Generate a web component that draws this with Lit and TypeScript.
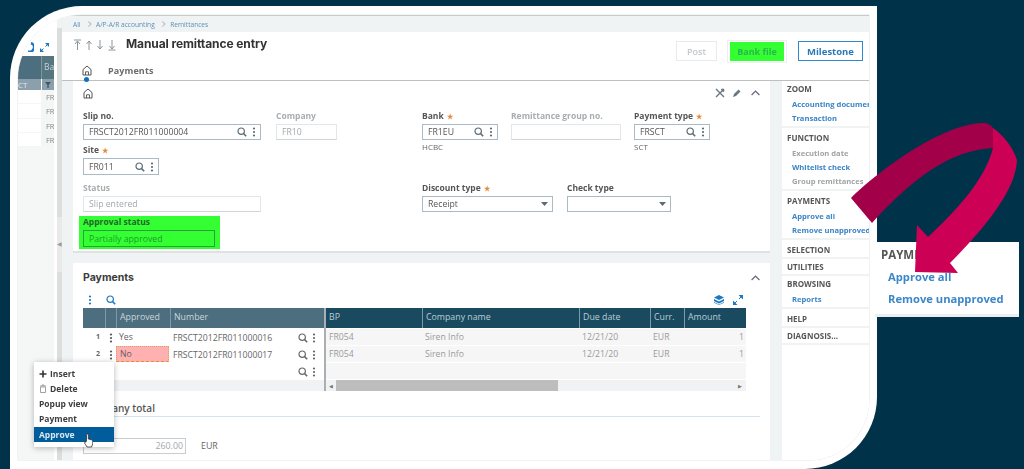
import { LitElement, html, css, svg } from "lit";
import { customElement } from "lit/decorators.js";

const searchIcon = html`<svg class="ic" width="10" height="10" viewBox="0 0 10 10"><circle cx="4.2" cy="4.2" r="3.2" fill="none" stroke="currentColor" stroke-width="1.2"/><path d="M6.6 6.6 9.2 9.2" stroke="currentColor" stroke-width="1.5"/></svg>`;
const dotsIcon = html`<svg class="ic" width="4" height="10" viewBox="0 0 4 10"><circle cx="2" cy="1.5" r="1.1" fill="currentColor"/><circle cx="2" cy="5" r="1.1" fill="currentColor"/><circle cx="2" cy="8.5" r="1.1" fill="currentColor"/></svg>`;
const homeIcon = html`<svg class="ic" width="10" height="11" viewBox="0 0 10 11"><path d="M1 4.5 5 1l4 3.5V10H1Z" fill="none" stroke="#555" stroke-width="1"/><path d="M3.5 10V6.8h3V10" fill="none" stroke="#555" stroke-width=".9"/></svg>`;
const caret = html`<svg class="ic" width="7" height="4" viewBox="0 0 7 4"><path d="M0 0h7L3.500 4Z" fill="#5a6b75"/></svg>`;
const chevUp = html`<svg class="ic chev" width="9" height="6" viewBox="0 0 9 6"><path d="M.6 5 4.500 1l3.900 4" fill="none" stroke="#667" stroke-width="1.200"/></svg>`;
const navArrow = (d: string) => svg`<path d=${d} fill="none" stroke="#8a949a" stroke-width="1"/>`;

type Field = { label: string; width: number; value?: string; req?: boolean; mode?: string; note?: string; muted?: boolean; tall?: boolean };

const sections: { h: string; items?: [string, boolean][] ; }[] = [
  { h: "ZOOM", items: [["Accounting document", true], ["Transaction", true]] },
  { h: "FUNCTION", items: [["Execution date", false], ["Whitelist check", true], ["Group remittances", false]] },
  { h: "PAYMENTS", items: [["Approve all", true], ["Remove unapproved", true]] },
  { h: "SELECTION" },
  { h: "UTILITIES" },
  { h: "BROWSING", items: [["Reports", true]] },
  { h: "HELP" },
  { h: "DIAGNOSIS..." },
];

@customElement("app-root")
export class AppRoot extends LitElement {
  static styles = css`
    :host { display: block; position: relative; width: 1024px; height: 469px; overflow: hidden; background: #003349; font-family: "Open Sans", "Noto Sans", sans-serif; font-size: 9.5px; color: #555; }
    * { box-sizing: border-box; }
    .ic { display: block; flex: none; }
    .stage { height: 469px; padding: 6px 0 0 10px; filter: blur(0.4px); }
    .window { position: relative; width: 867px; height: 463px; background: #fff; border-radius: 72px 0 72px 0; padding: 9px 8px 0 8px; }
    .inner { display: flex; height: 445px; border-radius: 64px 0 60px 0; overflow: hidden; box-shadow: 0 0 0 .5px #e6e6e6; }

    .strip { width: 36px; flex: none; background: #f5f6f6; display: flex; flex-direction: column; }
    .strip-top { height: 41px; background: #fff; display: flex; justify-content: flex-end; align-items: flex-end; gap: 6px; padding: 0 5px 4px 0; }
    .strip-head { height: 23px; display: grid; grid-template-columns: 23px 13px; background: #4d6e7f; color: #c5d1d8; font-size: 8.500px; }
    .strip-head span:last-child { background: #55757f; border-left: 1px solid #7d97a3; padding: 5px 0 0 2px; }
    .strip-filter { height: 11px; display: grid; grid-template-columns: 23px 13px; background: #8ba0ac; color: #dfe6ea; font-size: 8px; line-height: 11px; }
    .strip-filter span:last-child { border-left: 1px solid #fff; display: flex; justify-content: center; align-items: center; }
    .strip-row { height: 14.300px; background: #fff; display: grid; grid-template-columns: 23px 13px; font-size: 7.500px; color: #888; line-height: 14px; border-bottom: 1px solid #f5f5f5; }
    .strip-row span:last-child { background: #f4f5f5; padding-left: 5px; }

    .splitter { width: 8px; flex: none; display: flex; flex-direction: column; padding: 13px 0 0 3px; background: linear-gradient(90deg, #fff 3px, #f1f2f2 3px); }
    .dotted { flex: 1; width: 5px; background: radial-gradient(circle, #c4c4c4 .6px, transparent .8px) 0 0 / 2px 2px; }
    .grip { height: 55px; width: 5px; background: #e9e9e9; display: flex; align-items: center; justify-content: center; color: #999; font-size: 6px; }

    .main { flex: 1; min-width: 0; display: flex; flex-direction: column; }
    .crumbs { height: 17px; flex: none; background: #f0f3f4; border-top: 1px solid #c6cbcd; display: flex; align-items: center; gap: 6px; padding-left: 11px; font-size: 6.600px; color: #5c90b5; }
    .crumbs i { width: 3.500px; height: 3.500px; border: solid #b4bcc2; border-width: 1px 1px 0 0; transform: rotate(45deg); }
    .head { height: 48px; flex: none; display: flex; flex-direction: column; box-shadow: 0 1px 0 #bdbfc0; position: relative; z-index: 1; }
    .head-top { display: flex; align-items: flex-start; height: 32px; padding: 0 6px 0 11px; }
    .navs { width: 53px; flex: none; margin-top: 7px; }
    .title { flex: 1; font-family: Inter, "Liberation Sans", sans-serif; font-weight: 700; font-size: 12px; line-height: 24px; color: #333; letter-spacing: -.1px; }
    .btn { height: 20px; margin-top: 9px; display: flex; align-items: center; justify-content: center; font-weight: 700; font-size: 9px; }
    .post { width: 41px; border: 1px solid #e8ebec; color: #c4c8ca; margin-right: 10px; font-weight: 600; }
    .bank { width: 60px; height: 23px; margin-top: 8px; padding: 1px 2px; border: 1px solid #eef0f0; margin-right: 11px; }
    .bank span { display: flex; width: 100%; height: 100%; background: #33ff33; color: #2cb64c; align-items: center; justify-content: center; }
    .mile { width: 65px; border: 1.500px solid #2f88cc; color: #2a7ab8; font-size: 9.500px; }
    .tabs { display: flex; align-items: center; gap: 16px; padding: 0 0 0 20px; position: relative; }
    .tabs b { font-size: 9px; color: #6c6c6c; font-weight: 700; letter-spacing: .1px; }
    .tabdot { position: absolute; left: 22px; top: 13px; width: 5px; height: 5px; border-radius: 50%; background: #0f6fc0; }

    .body { flex: 1; min-height: 0; display: flex; }
    .content { width: 720px; flex: none; background: #f0f3f4; padding: 1px 12px 0 11px; display: flex; flex-direction: column; }
    .card { background: #fff; }
    .card1 { height: 172px; border-bottom: 2px solid #dfe1e2; padding: 5px 10px 0 10px; }
    .card1-top { display: flex; align-items: center; height: 14px; gap: 7px; color: #6c7880; }
    .card1-top .chev { margin-left: 2px; }
    .spacer { flex: 1; }
    .form { display: flex; margin-top: 11px; }
    .fl { width: 339px; flex: none; display: flex; flex-direction: column; }
    .fr { display: flex; flex-direction: column; }
    .row { display: flex; }
    .field { display: flex; flex-direction: column; flex: none; }
    .field label { height: 13px; line-height: 10px; font-weight: 700; font-size: 8.500px; color: #555; white-space: nowrap; }
    .field label.off { color: #a9adb0; }
    .field label s { text-decoration: none; color: #e88a3c; font-size: 6.500px; margin-left: 3px; }
    .ctl { height: 16px; border: 1px solid #a9bac5; display: flex; align-items: center; padding: 0 4px 0 5px; gap: 5px; color: #555; font-size: 8.700px; background: #fff; }
    .ctl span { flex: 1; white-space: nowrap; overflow: hidden; }
    .ctl.ro { border: 1px solid #e4e7e9; border-bottom-color: #cfd4d7; color: #a4a8ab; }
    .ctl.tall { height: 17px; }
    .ctl .ic { color: #5a6b75; }
    .note { height: 11px; line-height: 13px; font-size: 8px; color: #666; }
    .approval { margin: 4px 0 0 -4px; width: 141px; height: 33px; background: #33ff33; padding: 0 5px 0 4px; display: flex; flex-direction: column; }
    .approval label { height: 14px; line-height: 12px; font-weight: 700; font-size: 8.500px; color: #22662a; }
    .approval .ctl { border: 1px solid #2b9f3a; height: 17px; color: #1f9c2c; background: transparent; }

    .card2 { position: relative; margin-top: 10px; flex: 1; min-height: 0; padding: 0 10px; display: flex; flex-direction: column; }
    .card2-head { display: flex; align-items: center; height: 28px; padding-top: 1px; }
    .card2-head h2 { margin: 0; flex: 1; font-family: Inter, "Liberation Sans", sans-serif; font-size: 10.500px; font-weight: 700; color: #3c3c3c; }
    .tools { height: 17px; display: flex; align-items: center; padding-left: 5px; gap: 14px; color: #1a78c2; width: 663px; }
    .tools .r { margin-left: auto; display: flex; gap: 9px; padding-right: 3px; align-items: center; }

    .table { display: flex; width: 663px; height: 83px; flex: none; }
    .pane { display: flex; flex-direction: column; }
    .pl { width: 241px; }
    .pr { width: 420px; }
    .pdiv { width: 2px; background: #a9afb3; }
    .thead, .trow { display: grid; }
    .pl .thead, .pl .trow { grid-template-columns: 22px 11px 54px 154px; }
    .pr .thead, .pr .trow { grid-template-columns: 96px 157px 71px 34px 62px; }
    .thead { height: 20px; font-size: 8.800px; line-height: 19px; margin-bottom: 1px; }
    .pl .thead { background: #4d6e7f; color: #c9d5db; }
    .pr .thead { background: #1a4a5f; color: #b9cdd8; }
    .thead span { border-left: 1px solid #7f9aa7; padding-left: 3px; }
    .thead span:first-child { border-left: 0; }
    .trow { height: 17px; line-height: 16px; font-size: 8.700px; color: #5f5f5f; }
    .num { text-align: right; padding-right: 5px; font-weight: 700; font-size: 7px; color: #666; }
    .dots { display: flex; align-items: center; justify-content: center; color: #555; }
    .cell { padding-left: 3px; white-space: nowrap; }
    .cell-no { background: #ffb0b0; border: 1px dotted #d9a06a; border-bottom: 1px dashed #e09030; padding-left: 3px; line-height: 14px; margin: 0 1px 1px 0; }
    .tail { display: flex; align-items: center; padding-left: 3px; gap: 4px; color: #666; }
    .tail span { flex: 1; }
    .tail i { width: 4px; }
    .pr .trow { background: #f6f6f6 radial-gradient(circle, #e8e8e8 .55px, transparent .7px) 0 0 / 2px 2px; color: #9a9a9a; margin-bottom: 1px; height: 16px; line-height: 17px; }
    .pr .trow .cell:last-child { text-align: right; padding-right: 2px; }
    .scroll { height: 11px; background: #f1f2f3; margin-top: auto; }
    .pr .scroll { display: flex; align-items: center; padding-left: 3px; color: #777; font-size: 5px; gap: 3px; }
    .thumb { width: 222px; height: 11px; background: #bdbdbd; }
    .pr .scroll u { margin-left: auto; margin-right: 4px; text-decoration: none; }

    .total { margin-top: 10px; width: 677px; height: 16px; border-bottom: 1px solid #d3e4f0; font-size: 10px; font-weight: 600; color: #555; line-height: 14px; padding-left: 1px; }
    .amount { display: flex; align-items: center; margin-top: 21px; gap: 15px; font-size: 8.800px; color: #666; }
    .amount div { width: 103px; height: 16px; border: 1px solid #c9cdd0; text-align: right; padding-right: 2px; line-height: 15px; color: #a4a8ab; }

    .side { flex: 1; min-width: 0; display: flex; flex-direction: column; background: #fff; box-shadow: inset 0 1px 0 #e5e7e8; padding-top: 1px; }
    .sec { border-bottom: 2px solid #f1f3f3; padding: 3px 0 1px 5px; overflow: hidden; }
    .sec:first-child { padding-top: 1px; }
    .sec.solo { padding-bottom: 0; }
    .sec.solo + .sec { padding-top: 1px; }
    .sec h4 { margin: 0 0 1px; line-height: 14px; font-size: 8px; font-weight: 700; color: #565656; }
    .sec.solo h4 { margin-bottom: 0; }
    .sec a { display: block; line-height: 14px; padding-left: 5px; font-size: 7.600px; font-weight: 700; color: #3a84c6; white-space: nowrap; }
    .sec a.off { color: #a0a3a5; }

    .menu { position: absolute; left: 24px; top: 356px; width: 80px; height: 85px; background: #fff; box-shadow: 0 1px 6px rgba(0,0,0,.28); padding-top: 4px; z-index: 3; }
    .menu div { height: 15px; display: flex; align-items: center; gap: 3px; padding-left: 5px; font-size: 8.500px; font-weight: 700; color: #3e3e3e; }
    .menu div.sel { background: #005c9a; color: #dbe8f2; margin-top: 1px; }
    .hand { position: absolute; left: 50px; top: 71px; }

    .popup { position: absolute; left: 875px; top: 242px; width: 144px; height: 75px; background: #fff; border-bottom: 3px solid #eceeef; padding: 5px 0 0 6px; filter: blur(0.3px); }
    .popup h5 { margin: 0; font-size: 11.500px; font-weight: 700; color: #555; line-height: 15px; }
    .popup a { display: block; font-size: 11.200px; font-weight: 700; color: #3b87c9; line-height: 22px; padding-left: 7px; white-space: nowrap; }
    .popup h5 + a { margin-top: 4px; }
    .arrow { position: absolute; left: 0; top: 0; pointer-events: none; }
  `;

  private fld(f: Field) {
    return html`<div class="field" style="width:${f.width}px">
      <label class=${f.muted ? "off" : ""}>${f.label}${f.req ? html`<s>★</s>` : ""}</label>
      <div class="ctl ${f.muted ? "ro" : ""} ${f.tall ? "tall" : ""}">
        <span>${f.value ?? ""}</span>
        ${f.mode === "lookup" ? html`${searchIcon}${dotsIcon}` : f.mode === "select" ? caret : ""}
      </div>
      ${f.note ? html`<div class="note">${f.note}</div>` : ""}
    </div>`;
  }

  render() {
    return html`
      <div class="stage">
        <div class="window">
          <div class="inner">
            <div class="strip">
              <div class="strip-top">
                <svg class="ic" width="6" height="10" viewBox="0 0 6 10"><path d="M0 9.500a4.500 4.500 0 0 0 3-8.500" fill="none" stroke="#1a78c2" stroke-width="2.400"/></svg>
                <svg class="ic" width="9" height="9" viewBox="0 0 9 9"><path d="M5 0h4v4ZM0 9V5l4 4Z" fill="#1a78c2"/><path d="M7 2 5.500 3.500M2 7l1.500-1.500" stroke="#1a78c2"/></svg>
              </div>
              <div class="strip-head"><span></span><span>Ba</span></div>
              <div class="strip-filter"><span>CT</span><span><svg width="6" height="6" viewBox="0 0 6 6"><path d="M0 0h6L3.700 3v3H2.300V3Z" fill="#3f5a68"/></svg></span></div>
              ${[1, 2, 3, 4].map(() => html`<div class="strip-row"><span></span><span>FR</span></div>`)}
            </div>
            <div class="splitter">
              <div class="dotted"></div>
              <div class="grip">◀</div>
              <div class="dotted"></div>
            </div>
            <div class="main">
              <div class="crumbs"><span>All</span><i></i><span>A/P-A/R accounting</span><i></i><span>Remittances</span></div>
              <div class="head">
                <div class="head-top">
                  <svg class="navs" height="12" viewBox="0 0 53 12">
                    ${navArrow("M1 1h7M4.500 11V2M2 5l2.500-3L7 5")}
                    ${navArrow("M16 11V2M13.500 5 16 2l2.500 3")}
                    ${navArrow("M27 1v9M24.500 7 27 10l2.500-3")}
                    ${navArrow("M35.500 11h7M39 1v9M36.500 7 39 10l2.500-3")}
                  </svg>
                  <div class="title">Manual remittance entry</div>
                  <div class="btn post">Post</div>
                  <div class="btn bank"><span>Bank file</span></div>
                  <div class="btn mile">Milestone</div>
                </div>
                <div class="tabs">${homeIcon}<b>Payments</b><div class="tabdot"></div></div>
              </div>
              <div class="body">
                <div class="content">
                  <div class="card card1">
                    <div class="card1-top">
                      ${homeIcon}
                      <div class="spacer"></div>
                      <svg class="ic" width="10" height="10" viewBox="0 0 10 10"><path d="M1 1l8 8M9 1 1 9" stroke="#6c7880" stroke-width="1.400"/><path d="M6.500 1 9 3.500" stroke="#6c7880" stroke-width="1.800"/></svg>
                      <svg class="ic" width="10" height="10" viewBox="0 0 10 10"><path d="M1 9l1-3 4.500-4.500 2 2L4 8Z" fill="#6c7880"/></svg>
                      ${chevUp}
                    </div>
                    <div class="form">
                      <div class="fl">
                        <div class="row" style="gap:15px">
                          ${this.fld({ label: "Slip no.", width: 178, value: "FRSCT2012FR011000004", mode: "lookup" })}
                          ${this.fld({ label: "Company", width: 61, value: "FR10", muted: true })}
                        </div>
                        <div style="height:5px"></div>
                        ${this.fld({ label: "Site", width: 76, value: "FR011", req: true, mode: "lookup", tall: true })}
                        <div style="height:8px"></div>
                        ${this.fld({ label: "Status", width: 178, value: "Slip entered", muted: true })}
                        <div class="approval">
                          <label>Approval status</label>
                          <div class="ctl"><span>Partially approved</span></div>
                        </div>
                      </div>
                      <div class="fr">
                        <div class="row" style="gap:13px;height:72px">
                          ${this.fld({ label: "Bank", width: 76, value: "FR1EU", req: true, mode: "lookup", note: "HCBC" })}
                          ${this.fld({ label: "Remittance group no.", width: 110, muted: true })}
                          ${this.fld({ label: "Payment type", width: 76, value: "FRSCT", req: true, mode: "lookup", note: "SCT" })}
                        </div>
                        <div class="row" style="gap:14px">
                          ${this.fld({ label: "Discount type", width: 131, value: "Receipt", req: true, mode: "select" })}
                          ${this.fld({ label: "Check type", width: 104, mode: "select" })}
                        </div>
                      </div>
                    </div>
                  </div>
                  <div class="card card2">
                    <div class="card2-head"><h2>Payments</h2>${chevUp}</div>
                    <div class="tools">
                      ${dotsIcon}${searchIcon}
                      <div class="r">
                        <svg class="ic" width="10" height="10" viewBox="0 0 10 10"><path d="M5 0 10 2.500 5 5 0 2.500Z M0 4l5 2.500L10 4v2L5 8.500 0 6ZM0 7l5 2.500L10 7v.8L5 10 0 7.800Z" fill="#1a78c2"/></svg>
                        <svg class="ic" width="10" height="10" viewBox="0 0 10 10"><path d="M5.500 0H10v4.500ZM0 10V5.500L4.500 10Z" fill="#1a78c2"/><path d="M8 2 6 4M2 8l2-2" stroke="#1a78c2"/></svg>
                      </div>
                    </div>
                    <div class="table">
                      <div class="pane pl">
                        <div class="thead"><span></span><span></span><span>Approved</span><span>Number</span></div>
                        <div class="trow"><div class="num">1</div><div class="dots">${dotsIcon}</div><div class="cell">Yes</div><div class="tail"><span>FRSCT2012FR011000016</span>${searchIcon}${dotsIcon}<i></i></div></div>
                        <div class="trow"><div class="num">2</div><div class="dots">${dotsIcon}</div><div class="cell-no">No</div><div class="tail"><span>FRSCT2012FR011000017</span>${searchIcon}${dotsIcon}<i></i></div></div>
                        <div class="trow"><div></div><div></div><div></div><div class="tail"><span></span>${searchIcon}${dotsIcon}<i></i></div></div>
                        <div class="scroll"></div>
                      </div>
                      <div class="pdiv"></div>
                      <div class="pane pr">
                        <div class="thead"><span>BP</span><span>Company name</span><span>Due date</span><span>Curr.</span><span>Amount</span></div>
                        ${[1, 2].map(() => html`<div class="trow"><div class="cell">FR054</div><div class="cell">Siren Info</div><div class="cell">12/21/20</div><div class="cell">EUR</div><div class="cell">1</div></div>`)}
                        <div class="trow"></div>
                        <div class="scroll"><span>◀</span><div class="thumb"></div><u>▶</u></div>
                      </div>
                    </div>
                    <div class="total">Company total</div>
                    <div class="amount"><div>260.00</div><span>EUR</span></div>
                  </div>
                </div>
                <div class="side">
                  ${sections.map((s) => html`<div class="sec ${s.items ? "" : "solo"}"><h4>${s.h}</h4>${(s.items ?? []).map(([t, on]) => html`<a class=${on ? "" : "off"}>${t}</a>`)}</div>`)}
                </div>
              </div>
            </div>
          </div>
          <div class="menu">
            <div><svg class="ic" width="8" height="8" viewBox="0 0 8 8"><path d="M4 .5v7M.5 4h7" stroke="#333" stroke-width="1.600"/></svg>Insert</div>
            <div><svg class="ic" width="8" height="9" viewBox="0 0 8 9"><path d="M1 2h6M3 2V1h2v1M1.500 3h5v5.500h-5Z" fill="none" stroke="#999" stroke-width=".9"/></svg>Delete</div>
            <div>Popup view</div>
            <div>Payment</div>
            <div class="sel">Approve</div>
            <svg class="hand" width="9" height="15" viewBox="0 0 9 15"><path d="M2.500 8V1.800a.9.9 0 0 1 1.800 0V6l3.200.8c.8.2 1.200.7 1.200 1.500v2.500L7.600 14H3L.6 10.300C.2 9.600 1 8.800 1.700 9.300Z" fill="#fff" stroke="#333" stroke-width=".8"/></svg>
          </div>
        </div>
      </div>
      <div class="popup">
        <h5>PAYMENTS</h5>
        <a>Approve all</a>
        <a>Remove unapproved</a>
      </div>
      <svg class="arrow" width="1024" height="469" viewBox="0 0 1024 469">
        <path d="M851 198 C880 170 940 125 982 123 C988 123 991 125 993 128 L993 148 C960 150 925 165 872 223 Z" fill="#a3004a"/>
        <path d="M993 128 C1003 135 1013 147 1017 160 C1016 190 985 228 950 263 L958 273 L915 272 L917 225 L928 237 C955 212 985 180 993 148 Z" fill="#cc0055"/>
      </svg>
    `;
  }
}
